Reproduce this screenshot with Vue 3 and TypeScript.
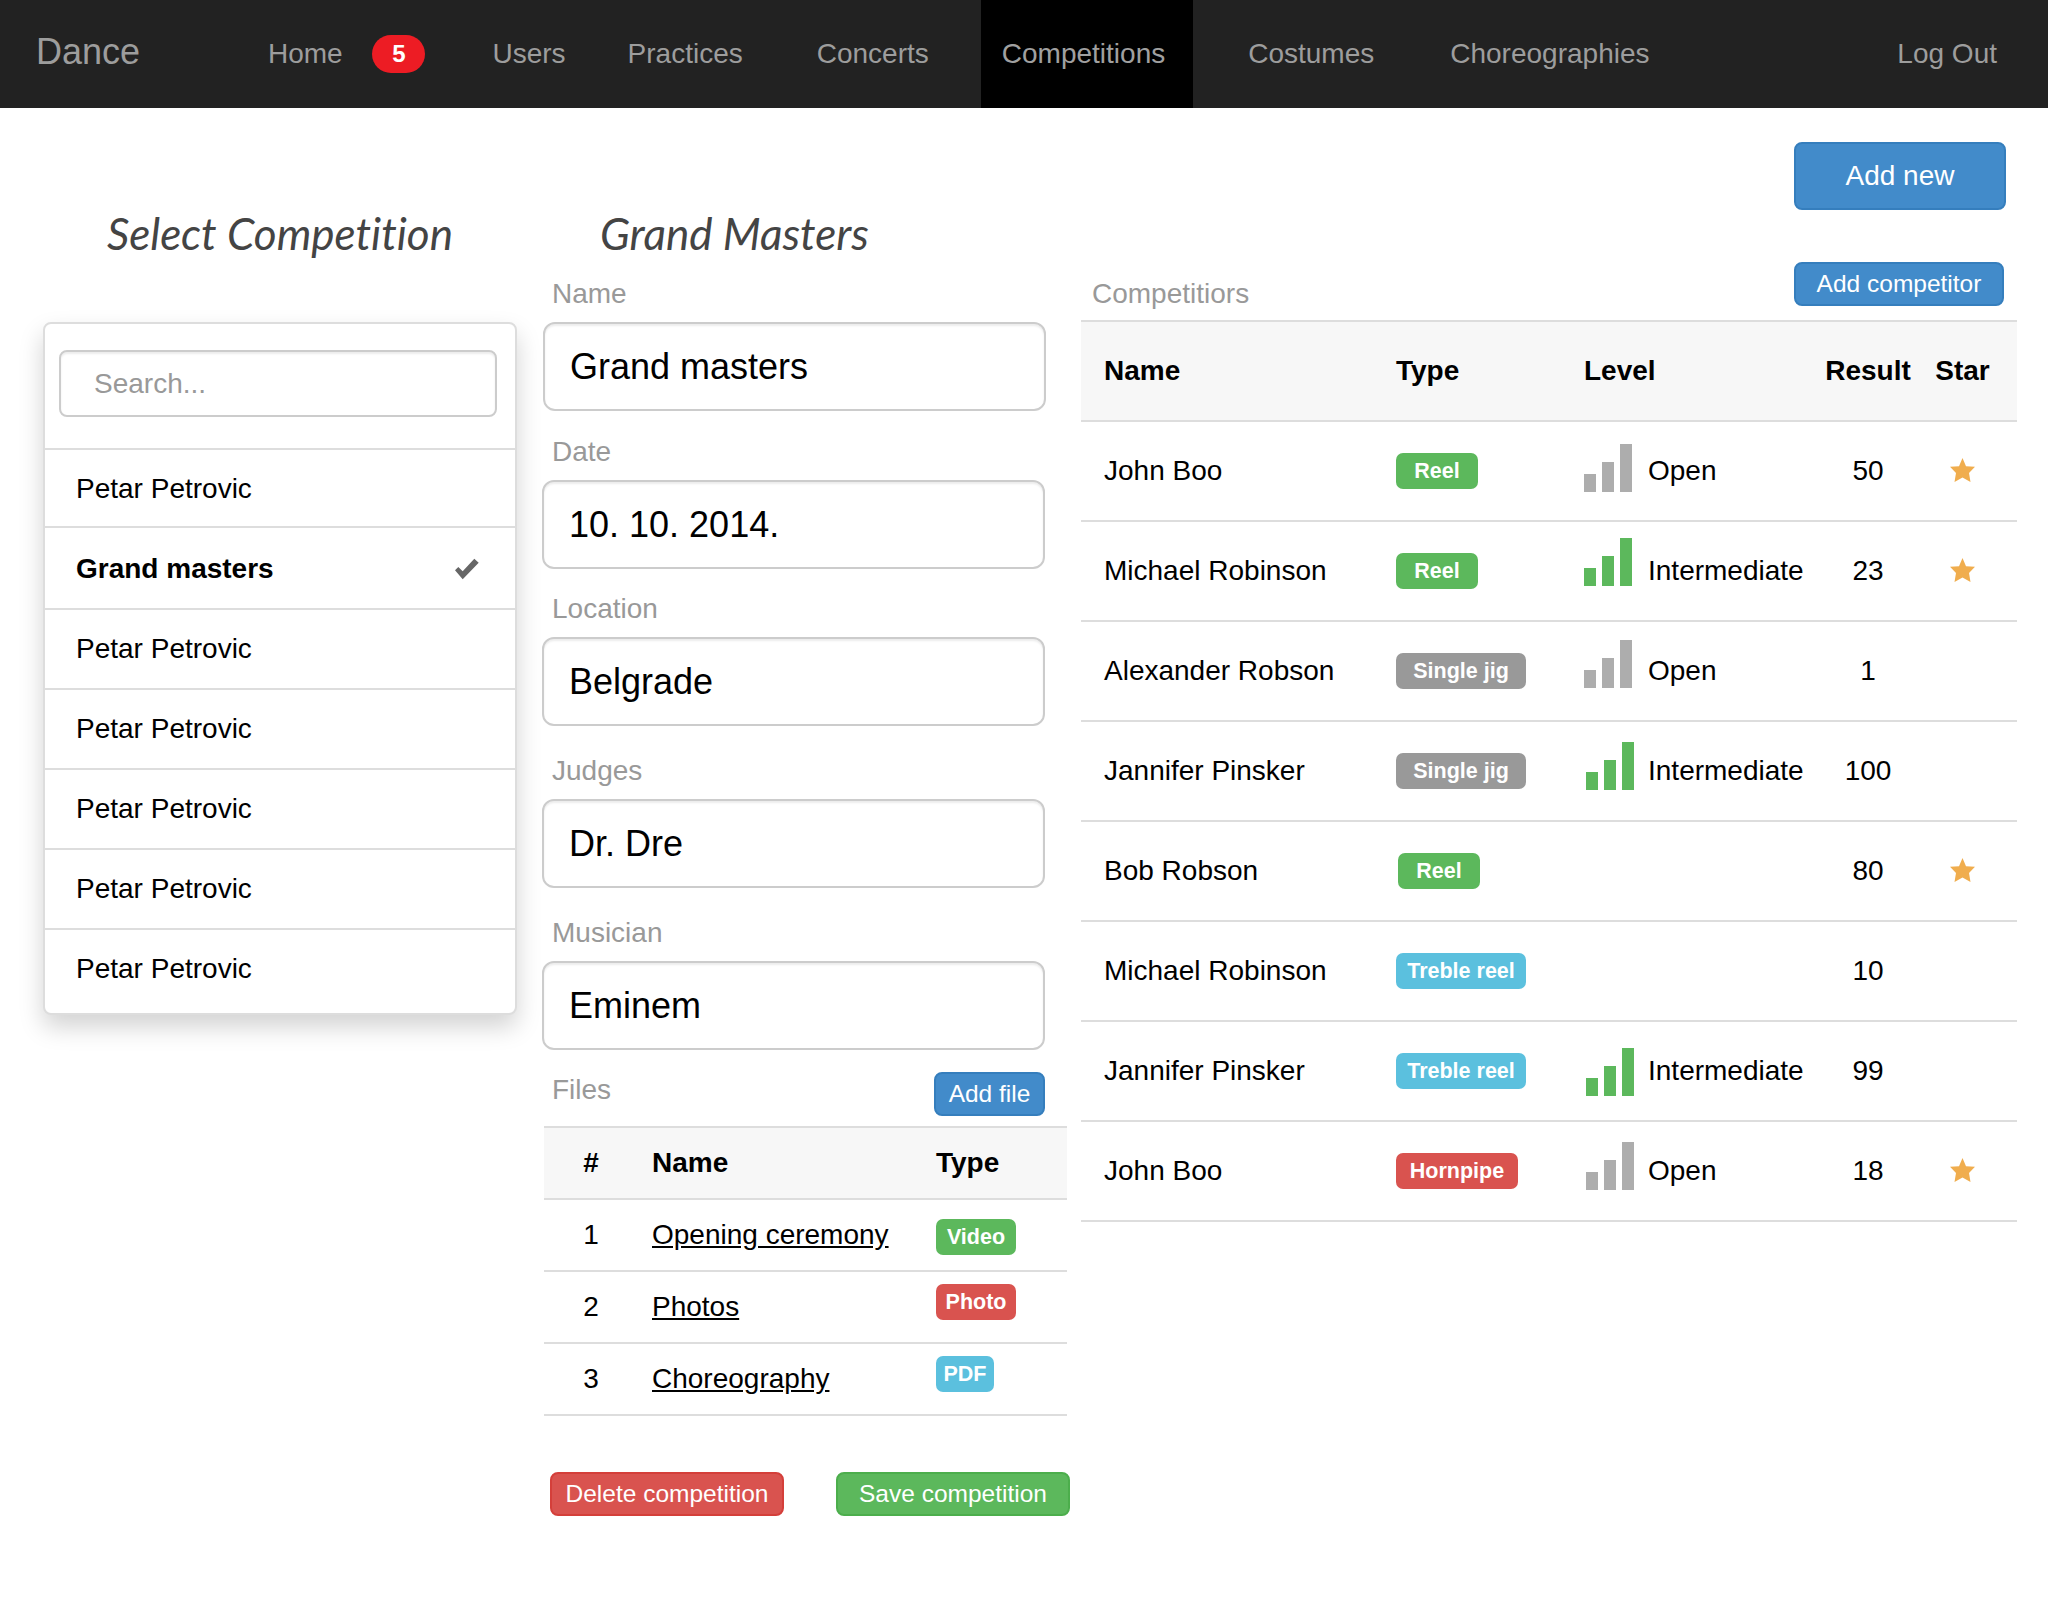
<script setup lang="ts">
type Tone = "success" | "default" | "info" | "danger"

interface Competitor {
  name: string
  type: string
  tone: Tone
  labelWidth: number
  labelX?: number
  level?: string
  barX?: number
  barY?: number
  result: number
  star?: boolean
}

const navItems = ["Users", "Practices", "Concerts", "Competitions", "Costumes", "Choreographies"]

const competitions = [
  { name: "Petar Petrovic" },
  { name: "Grand masters", selected: true },
  { name: "Petar Petrovic" },
  { name: "Petar Petrovic" },
  { name: "Petar Petrovic" },
  { name: "Petar Petrovic" },
  { name: "Petar Petrovic" },
]

const fields = [
  { label: "Name", value: "Grand masters" },
  { label: "Date", value: "10. 10. 2014." },
  { label: "Location", value: "Belgrade" },
  { label: "Judges", value: "Dr. Dre" },
  { label: "Musician", value: "Eminem" },
]

const files = [
  { id: 1, name: "Opening ceremony", type: "Video", tone: "success", width: 80, raised: false },
  { id: 2, name: "Photos", type: "Photo", tone: "danger", width: 80, raised: true },
  { id: 3, name: "Choreography", type: "PDF", tone: "info", width: 58, raised: true },
]

const competitors: Competitor[] = [
  { name: "John Boo", type: "Reel", tone: "success", labelWidth: 82, level: "Open", barY: -3, result: 50, star: true },
  { name: "Michael Robinson", type: "Reel", tone: "success", labelWidth: 82, level: "Intermediate", barY: -9, result: 23, star: true },
  { name: "Alexander Robson", type: "Single jig", tone: "default", labelWidth: 130, level: "Open", barY: -7, result: 1 },
  { name: "Jannifer Pinsker", type: "Single jig", tone: "default", labelWidth: 130, level: "Intermediate", barX: 2, barY: -5, result: 100 },
  { name: "Bob Robson", type: "Reel", tone: "success", labelWidth: 82, labelX: 2, result: 80, star: true },
  { name: "Michael Robinson", type: "Treble reel", tone: "info", labelWidth: 130, result: 10 },
  { name: "Jannifer Pinsker", type: "Treble reel", tone: "info", labelWidth: 130, level: "Intermediate", barX: 2, barY: 1, result: 99 },
  { name: "John Boo", type: "Hornpipe", tone: "danger", labelWidth: 122, level: "Open", barX: 2, barY: -5, result: 18, star: true },
]
</script>

<template>
  <div class="page">
    <nav class="navbar">
      <a class="brand">Dance</a>
      <a class="nav-link home">Home <span class="badge">5</span></a>
      <a v-for="item in navItems" :key="item" class="nav-link" :class="{ active: item === 'Competitions' }">{{ item }}</a>
      <a class="nav-link logout">Log Out</a>
    </nav>

    <div class="toolbar">
      <button type="button" class="btn primary add-new">Add new</button>
    </div>

    <main class="columns">
      <section class="col-left">
        <h2 class="title">Select Competition</h2>
        <div class="card">
          <div class="search-box">
            <input class="search" type="text" placeholder="Search..." />
          </div>
          <div v-for="(item, i) in competitions" :key="i" class="list-row" :class="{ selected: item.selected }">
            <span>{{ item.name }}</span>
            <svg v-if="item.selected" class="check" viewBox="0 0 24 22" width="24" height="22">
              <polygon points="0,12.3 3.3,9 7.7,13.3 19.3,0.7 23.7,4.7 7.7,21.3" fill="#666" />
            </svg>
          </div>
        </div>
      </section>

      <section class="col-mid">
        <h2 class="title mid-title">Grand Masters</h2>
        <div v-for="field in fields" :key="field.label" class="field">
          <label>{{ field.label }}</label>
          <input class="text-input" type="text" :value="field.value" />
        </div>

        <div class="files-head">
          <span class="muted">Files</span>
          <button type="button" class="btn primary small add-file">Add file</button>
        </div>
        <table class="files">
          <thead>
            <tr>
              <th class="num">#</th>
              <th>Name</th>
              <th>Type</th>
            </tr>
          </thead>
          <tbody>
            <tr v-for="file in files" :key="file.id">
              <td class="num">{{ file.id }}</td>
              <td><a class="file-link">{{ file.name }}</a></td>
              <td>
                <span class="label" :class="[file.tone, file.raised ? 'raised' : 'lowered']" :style="{ width: file.width + 'px' }">{{ file.type }}</span>
              </td>
            </tr>
          </tbody>
        </table>

        <div class="actions">
          <button type="button" class="btn danger small wide">Delete competition</button>
          <button type="button" class="btn success small wide">Save competition</button>
        </div>
      </section>

      <section class="col-right">
        <div class="right-head">
          <span class="muted">Competitiors</span>
          <button type="button" class="btn primary small add-competitor">Add competitor</button>
        </div>
        <table class="competitors">
          <colgroup>
            <col style="width: 292px" />
            <col style="width: 188px" />
            <col style="width: 250px" />
            <col style="width: 114px" />
            <col style="width: 92px" />
          </colgroup>
          <thead>
            <tr>
              <th>Name</th>
              <th>Type</th>
              <th>Level</th>
              <th class="center">Result</th>
              <th class="center star-cell">Star</th>
            </tr>
          </thead>
          <tbody>
            <tr v-for="(row, i) in competitors" :key="i">
              <td>{{ row.name }}</td>
              <td>
                <span
                  class="label"
                  :class="row.tone"
                  :style="{ width: row.labelWidth + 'px', marginLeft: (row.labelX ?? 0) + 'px' }"
                >{{ row.type }}</span>
              </td>
              <td>
                <div v-if="row.level" class="level">
                  <span
                    class="bars"
                    :class="row.level === 'Open' ? 'grey' : 'green'"
                    :style="{ transform: `translate(${row.barX ?? 0}px, ${row.barY ?? 0}px)` }"
                  >
                    <i class="b1"></i><i class="b2"></i><i class="b3"></i>
                  </span>
                  <span>{{ row.level }}</span>
                </div>
              </td>
              <td class="center">{{ row.result }}</td>
              <td class="center star-cell">
                <svg v-if="row.star" class="star" viewBox="0 0 25 24" width="25" height="24">
                  <polygon
                    points="12.5,0 16,8.3 25,8.8 19,15 20.5,24 12.5,19.5 4.5,24 6,15 0,8.8 9,8.3"
                    fill="#f0ad4e"
                  />
                </svg>
              </td>
            </tr>
          </tbody>
        </table>
      </section>
    </main>
  </div>
</template>

<style scoped>
.page {
  width: 2048px;
  height: 1600px;
  background: #fff;
  color: #000;
  font-family: "Liberation Sans", Arial, sans-serif;
  font-size: 28px;
}

.navbar {
  display: flex;
  align-items: stretch;
  height: 108px;
  padding-right: 31px;
  box-sizing: border-box;
  background: #222;
}

.brand {
  width: 248px;
  padding: 31px 0 0 36px;
  box-sizing: border-box;
  font-size: 36px;
  line-height: 42px;
  color: #9d9d9d;
}

.nav-link {
  display: flex;
  align-items: center;
  padding: 0 20px;
  color: #9d9d9d;
  white-space: pre;
}

.nav-link:nth-child(3) { margin-left: 27px; }
.nav-link:nth-child(4) { margin-left: 22px; }
.nav-link:nth-child(5) { margin-left: 34px; }
.nav-link:nth-child(6) { margin-left: 32px; padding: 0 28px 0 21px; }
.nav-link:nth-child(7) { margin-left: 35px; }
.nav-link:nth-child(8) { margin-left: 36px; }

.nav-link.active {
  background: #000;
  color: #a0a0a0;
}

.nav-link.logout {
  margin-left: auto;
}

.home {
  gap: 22px;
}

.badge {
  display: flex;
  align-items: center;
  justify-content: center;
  width: 53px;
  height: 38px;
  border-radius: 19px;
  background: #ed1c24;
  color: #fff;
  font-size: 24px;
  font-weight: 700;
}

.toolbar {
  display: flex;
  justify-content: flex-end;
  padding: 34px 42px 0 0;
}

.btn {
  border-radius: 8px;
  border: 2px solid transparent;
  color: #fff;
  font-family: inherit;
  font-size: 28px;
  padding: 0;
  box-sizing: border-box;
}

.btn.small {
  font-size: 24.5px;
  height: 44px;
}

.primary { background: #428bca; border-color: #357ebd; }
.danger.btn { background: #d9534f; border-color: #d43f3a; }
.success.btn { background: #5cb85c; border-color: #4cae4c; }

.add-new { width: 212px; height: 68px; }
.add-competitor { width: 210px; }
.add-file { width: 111px; }
.wide { width: 234px; }

.columns {
  display: grid;
  grid-template-columns: 499px 539px 936px;
  margin-left: 43px;
  align-items: start;
}

.title {
  margin: 0;
  font-family: Lato, sans-serif;
  font-size: 44px;
  font-style: italic;
  font-weight: 400;
  font-variant-ligatures: none;
  line-height: 46px;
  height: 50px;
  color: #444;
}

.col-left {
  padding-right: 25px;
}

.col-left .title {
  text-align: center;
}

.card {
  margin-top: 62px;
  border: 2px solid #ddd;
  border-radius: 8px;
  background: #fff;
  box-shadow: 0 12px 24px rgba(0, 0, 0, 0.175);
  padding-bottom: 5px;
}

.search-box {
  height: 124px;
  padding: 26px 18px 0 14px;
  box-sizing: border-box;
}

.search {
  display: block;
  width: 100%;
  height: 67px;
  box-sizing: border-box;
  padding: 1px 33px 0;
  border: 2px solid #ccc;
  border-radius: 8px;
  box-shadow: inset 0 2px 2px rgba(0, 0, 0, 0.075);
  font: 28px "Liberation Sans", Arial, sans-serif;
}

.search::placeholder {
  color: #999;
  opacity: 1;
}

.list-row {
  display: flex;
  align-items: center;
  justify-content: space-between;
  height: 80px;
  box-sizing: border-box;
  padding: 0 36px 0 31px;
  border-top: 2px solid #ddd;
}

.list-row:nth-child(2) { height: 78px; padding-top: 1px; }
.list-row.selected { height: 82px; padding-top: 1px; font-weight: 700; }

.mid-title {
  margin-left: 58px;
}

.field label {
  display: block;
  height: 40px;
  margin-left: 10px;
  line-height: 40px;
  color: #999;
}

.field {
  width: 503px;
  margin-top: 21px;
}

.field:nth-of-type(1) { margin-top: 14px; }
.field:nth-of-type(3) { margin-top: 20px; }
.field:nth-of-type(4) { margin-top: 25px; }
.field:nth-of-type(5) { margin-top: 25px; }
.field:nth-of-type(1) .text-input { margin-left: 1px; }

.text-input {
  display: block;
  width: 100%;
  height: 89px;
  margin-top: 8px;
  box-sizing: border-box;
  padding: 1px 25px 0;
  border: 2px solid #ccc;
  border-radius: 12px;
  box-shadow: inset 0 2px 2px rgba(0, 0, 0, 0.075);
  color: #000;
  font: 36px "Liberation Sans", Arial, sans-serif;
}

.muted {
  color: #999;
}

.files-head {
  display: flex;
  justify-content: space-between;
  align-items: flex-start;
  width: 503px;
  margin-top: 22px;
}

.files-head .muted {
  margin-left: 10px;
  line-height: 36px;
}

table {
  border-collapse: separate;
  border-spacing: 0;
  table-layout: fixed;
}

th {
  background: #f7f7f7;
  text-align: left;
  box-sizing: border-box;
}

td {
  box-sizing: border-box;
}

.files {
  width: 523px;
  margin: 10px 0 0 2px;
  border-top: 2px solid #ddd;
}

.files th,
.files td {
  height: 72px;
  padding: 0 0 0 14px;
  border-bottom: 2px solid #ddd;
}

.files th:nth-child(1) { width: 94px; }
.files th:nth-child(2) { width: 284px; }

.files .num {
  padding: 0;
  text-align: center;
}

.file-link {
  color: #000;
  text-decoration: underline;
}

.label {
  display: inline-flex;
  align-items: center;
  justify-content: center;
  height: 36px;
  border-radius: 7px;
  color: #fff;
  font-size: 21.5px;
  font-weight: 700;
  vertical-align: middle;
}

.label.success { background: #5cb85c; }
.label.default { background: #999; }
.label.info { background: #5bc0de; }
.label.danger { background: #d9534f; }
.label.raised { margin-bottom: 10px; }
.label.lowered { margin-top: 4px; }

.actions {
  display: flex;
  gap: 52px;
  margin: 56px 0 0 8px;
}

.right-head {
  display: flex;
  justify-content: space-between;
  align-items: flex-start;
  height: 58px;
  padding: 0 13px 0 11px;
  margin-top: 52px;
}

.right-head .muted {
  margin-top: 12px;
  line-height: 40px;
}

.competitors {
  width: 936px;
  border-top: 2px solid #ddd;
}

.competitors th,
.competitors td {
  height: 100px;
  padding: 0 0 0 23px;
  border-bottom: 2px solid #ddd;
}

.competitors .center {
  padding: 0;
  text-align: center;
}

.competitors .star-cell {
  padding-right: 17px;
}

.level {
  display: flex;
  align-items: center;
  gap: 16px;
}

.bars {
  display: flex;
  align-items: flex-end;
  justify-content: space-between;
  width: 48px;
  height: 48px;
}

.bars i {
  display: block;
  width: 12px;
}

.bars .b1 { height: 18px; }
.bars .b2 { height: 30px; }
.bars .b3 { height: 48px; }
.bars.grey i { background: #adadad; }
.bars.green i { background: #5cb85c; }

.star {
  display: block;
  margin: -3px auto 0;
}
</style>
